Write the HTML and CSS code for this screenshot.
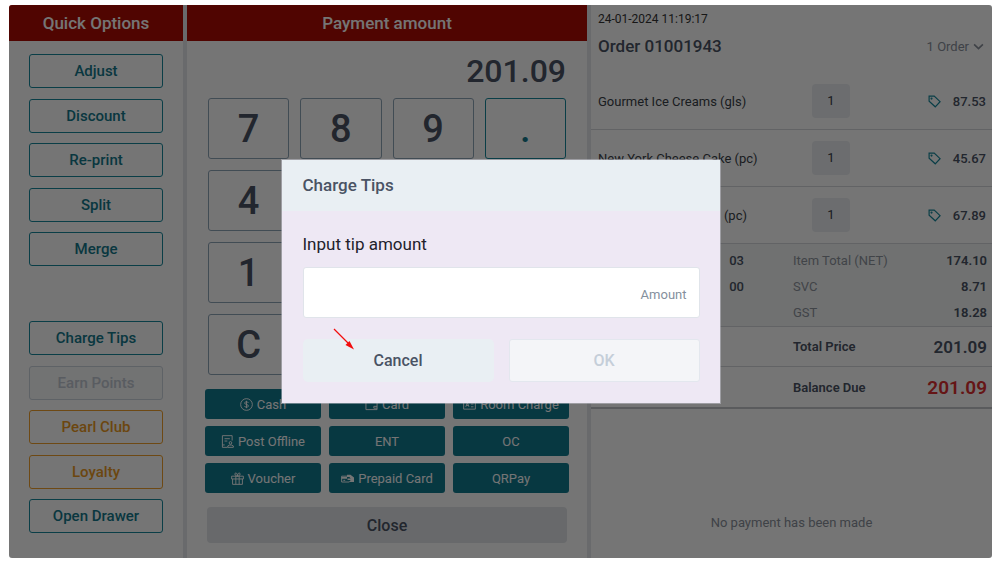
FILE: index.html
```html
<!DOCTYPE html>
<html lang="en">
<head>
    <meta charset="UTF-8">
    <meta name="viewport" content="width=device-width, initial-scale=1.0">
    <title>Payment - Charge Tips</title>
    <link rel="stylesheet" href="styles.css">
</head>
<body>
    <div class="app">
        <nav class="panel options">
            <h2 class="panel-title">Quick Options</h2>
            <div class="option-list">
                <button type="button" class="option">Adjust</button>
                <button type="button" class="option">Discount</button>
                <button type="button" class="option">Re-print</button>
                <button type="button" class="option">Split</button>
                <button type="button" class="option">Merge</button>
                <span class="option-gap"></span>
                <button type="button" class="option">Charge Tips</button>
                <button type="button" class="option" disabled>Earn Points</button>
                <button type="button" class="option gold">Pearl Club</button>
                <button type="button" class="option gold">Loyalty</button>
                <button type="button" class="option">Open Drawer</button>
            </div>
        </nav>

        <main class="panel payment">
            <h2 class="panel-title">Payment amount</h2>
            <div class="amount">201.09</div>
            <div class="keypad">
                <button type="button" class="key">7</button>
                <button type="button" class="key">8</button>
                <button type="button" class="key">9</button>
                <button type="button" class="key dot">.</button>
                <button type="button" class="key first">4</button>
                <button type="button" class="key first">1</button>
                <button type="button" class="key first">C</button>
            </div>
            <div class="methods">
                <button type="button" class="method">
                    <svg class="icon" viewBox="0 0 14 14"><circle cx="7" cy="7" r="6.3"/><path d="M9 5.2C8.7 4.4 7.9 4.1 7 4.1c-1.2 0-2 .6-2 1.4 0 2 4 .9 4 3 0 .9-.9 1.5-2 1.5-1 0-1.900-.4-2.100-1.300M7 3v8"/></svg>
                    Cash
                </button>
                <button type="button" class="method">
                    <svg class="icon" viewBox="0 0 14 14"><path d="M1 2h12v10.500H1zM13 9H9.500v2H13"/></svg>
                    Card
                </button>
                <button type="button" class="method">
                    <svg class="icon" viewBox="0 0 14 14"><path d="M.7 2h12.600v10H.7zM3 9.500l1.700-4.500 1.700 4.500M3.600 8h2.200M8.500 6.500h2.800M8.500 9.500h2.800"/></svg>
                    Room Charge
                </button>
                <button type="button" class="method">
                    <svg class="icon" viewBox="0 0 14 14"><path d="M12 6V.7H1.500v12.600H7M3.800 4h5.700M3.800 6.500h3M1.500 10.700h2.500"/><circle cx="10.200" cy="8.500" r="1.400"/><path d="M7.300 13.300v-1.500l2-1h2l2 1v1.500z"/></svg>
                    Post Offline
                </button>
                <button type="button" class="method">ENT</button>
                <button type="button" class="method">OC</button>
                <button type="button" class="method">
                    <svg class="icon" viewBox="0 0 14 14"><path d="M.7 4.500h12.600v3H.7zM1.700 7.500v5.800h10.600V7.500M5.200 4.500v8.800M8.800 4.500v8.800M7 4.500C4 4.500 3.500 1.300 5 1.100 6.500 1 7 3 7 4.500c0-1.500.5-3.500 2-3.400 1.500.2 1 3.400-2 3.400"/></svg>
                    Voucher
                </button>
                <button type="button" class="method">
                    <svg class="icon" viewBox="0 0 14 14"><path d="M8.500 4.500H.7v6.300h8.300M2.500 9h2"/><path class="solid" d="M.5 5.500h6v1.700h-6zM6.500 3h3.700L14 6v4.800H8.500L10.500 8.500H7V7h3.500L9 5.500H6.500z"/></svg>
                    Prepaid Card
                </button>
                <button type="button" class="method">QRPay</button>
            </div>
            <button type="button" class="close">Close</button>
        </main>

        <section class="panel order">
            <div class="order-head">
                <div class="date">24-01-2024 11:19:17</div>
                <div class="order-line">
                    <h1 class="order-number">Order 01001943</h1>
                    <button type="button" class="order-count">
                        1 Order
                        <svg class="chevron" viewBox="0 0 10 10"><path d="M1 3l4 4 4-4"/></svg>
                    </button>
                </div>
            </div>
            <div class="item">
                <span>Gourmet Ice Creams (gls)</span>
                <span class="qty">1</span>
                <svg class="tag" viewBox="0 0 14 14"><path d="M1.200 1.200h5.500l6.300 6-5.200 5.500L1.200 6.700z"/><circle cx="3.800" cy="3.900" r=".5"/></svg>
                <span class="price">87.53</span>
            </div>
            <div class="item">
                <span>New York Cheese Cake (pc)</span>
                <span class="qty">1</span>
                <svg class="tag" viewBox="0 0 14 14"><path d="M1.200 1.200h5.500l6.300 6-5.200 5.500L1.200 6.700z"/><circle cx="3.800" cy="3.900" r=".5"/></svg>
                <span class="price">45.67</span>
            </div>
            <div class="item">
                <span class="item-end">(pc)</span>
                <span class="qty">1</span>
                <svg class="tag" viewBox="0 0 14 14"><path d="M1.200 1.200h5.500l6.300 6-5.200 5.500L1.200 6.700z"/><circle cx="3.800" cy="3.900" r=".5"/></svg>
                <span class="price">67.89</span>
            </div>
            <div class="totals">
                <div class="row"><span class="count">03</span><span class="label">Item Total (NET)</span><span class="value">174.10</span></div>
                <div class="row"><span class="count">00</span><span class="label">SVC</span><span class="value">8.71</span></div>
                <div class="row"><span class="count"></span><span class="label">GST</span><span class="value">18.28</span></div>
            </div>
            <div class="row sum"><span class="count"></span><span>Total Price</span><span class="sum-value">201.09</span></div>
            <div class="row sum due"><span class="count"></span><span>Balance Due</span><span class="sum-value">201.09</span></div>
            <p class="no-payment">No payment has been made</p>
        </section>

        <div class="overlay">
            <form class="dialog" role="dialog" aria-labelledby="dialogTitle">
                <h2 class="dialog-title" id="dialogTitle">Charge Tips</h2>
                <div class="dialog-body">
                    <label for="tip">Input tip amount</label>
                    <input type="text" id="tip" name="tip" placeholder="Amount">
                    <div class="dialog-buttons">
                        <button type="button" class="cancel">Cancel</button>
                        <button type="submit" class="ok" disabled>OK</button>
                    </div>
                </div>
                <svg class="arrow" viewBox="0 0 22 22"><path class="shaft" d="M1 1l14 14"/><path class="head" d="M21 21.500l-8.500-4.500 4-4z"/></svg>
            </form>
        </div>
    </div>
</body>
</html>
```

FILE: styles.css
```css
* {
    box-sizing: border-box;
}
body {
    margin: 0;
    padding: 5px 8px 11px 9px;
    background-color: #fff;
    color: #4a5364;
    font-family: Roboto, "Liberation Sans", sans-serif;
    font-size: 13px;
}
h1, h2, p {
    margin: 0;
}
button {
    padding: 0;
    font-family: inherit;
    cursor: pointer;
}
svg {
    fill: none;
    stroke: currentColor;
    flex: none;
}
.app {
    position: relative;
    display: grid;
    grid-template-columns: 174fr 400fr 401fr;
    gap: 4px;
    min-height: calc(100vh - 16px);
    background-color: #e4e7ec;
    border-radius: 3px;
    overflow: hidden;
}
.panel {
    display: flex;
    flex-direction: column;
    min-width: 0;
    background-color: #fff;
}
.panel-title {
    height: 36px;
    line-height: 36px;
    text-align: center;
    font-size: 17px;
    font-weight: 500;
    color: #fff;
    background-color: #ae0d04;
}

/* Quick options */
.option-list {
    flex: 1;
    display: grid;
    grid-template-rows: repeat(11, 34px);
    align-content: space-between;
    padding: 13px 20px 25px;
}
.option {
    background-color: #fff;
    border: 1px solid #17889c;
    border-radius: 3px;
    color: #14798b;
    font-size: 15px;
    font-weight: 500;
}
.option:disabled {
    background-color: #f8fafb;
    border-color: #cdd5de;
    color: #c3c9d3;
}
.option.gold {
    border-color: #f0a02c;
    color: #eb9a24;
}

/* Payment */
.amount {
    padding: 0 21px;
    height: 57px;
    line-height: 60px;
    text-align: right;
    font-size: 32px;
    font-weight: 500;
}
.keypad {
    display: grid;
    grid-template-columns: repeat(4, 1fr);
    grid-auto-rows: 61px;
    gap: 11px;
    padding: 0 21px;
}
.key {
    background-color: #fff;
    border: 1px solid #8fa5b8;
    border-radius: 3px;
    color: #4a5364;
    font-size: 38px;
    font-weight: 500;
}
.key.first {
    grid-column: 1;
}
.key.dot {
    border-color: #17889c;
    color: #14798b;
}
.methods {
    display: grid;
    grid-template-columns: repeat(3, 1fr);
    grid-auto-rows: 30px;
    gap: 7px 8px;
    padding: 14px 18px;
}
.method {
    display: flex;
    align-items: center;
    justify-content: center;
    gap: 4px;
    background-color: #117a8f;
    border: none;
    border-radius: 3px;
    color: #fff;
    font-size: 13px;
}
.icon {
    width: 13px;
    height: 13px;
}
.icon .solid {
    fill: currentColor;
    stroke: none;
}
.close {
    height: 36px;
    margin: 0 20px;
    background-color: #e2e5e9;
    border: none;
    border-radius: 4px;
    color: #4a5364;
    font-size: 16px;
    font-weight: 500;
}

/* Order */
.order-head {
    height: 68px;
    padding: 7px 8px 0 7px;
}
.date {
    line-height: 15px;
    font-size: 12px;
    color: #333;
}
.order-line {
    display: flex;
    justify-content: space-between;
    align-items: center;
    height: 38px;
}
.order-number {
    font-size: 17px;
    font-weight: 500;
}
.order-count {
    display: flex;
    align-items: center;
    gap: 4px;
    background: none;
    border: none;
    color: #8a909b;
    font-size: 13px;
}
.chevron {
    width: 11px;
    height: 11px;
    stroke-width: 1.5;
}
.item {
    display: grid;
    grid-template-columns: 1fr 38px 78px 13px 45px;
    align-items: center;
    height: 57px;
    padding: 0 6px 0 7px;
    border-bottom: 1px solid #d5d8dc;
    color: #3a3f48;
}
.item-end {
    justify-self: end;
    padding-right: 65px;
}
.qty {
    height: 34px;
    line-height: 34px;
    text-align: center;
    background-color: #ebedf2;
    border-radius: 4px;
}
.tag {
    grid-column: 4;
    width: 13px;
    height: 13px;
    stroke-width: 1.3;
    color: #17889c;
}
.price {
    text-align: right;
    font-weight: 500;
    color: #4a5364;
}
.totals {
    padding: 3px 0 1px;
    background-color: #f3f7f6;
    border-bottom: 1px solid #d5d8dc;
}
.row {
    display: grid;
    grid-template-columns: 153px 1fr auto;
    column-gap: 49px;
    align-items: center;
    height: 26px;
    padding-right: 5px;
    white-space: nowrap;
}
.count {
    text-align: right;
    font-weight: 500;
}
.label {
    color: #8f949e;
}
.value {
    font-weight: 600;
}
.row.sum {
    height: 40px;
    border-bottom: 1px solid #d5d8dc;
    font-weight: 600;
}
.row.due {
    height: 42px;
    border-bottom: 2px solid #c4c6ca;
}
.sum-value {
    font-size: 17px;
}
.due .sum-value {
    font-size: 19px;
    color: #dd2f30;
}
.no-payment {
    margin-top: auto;
    padding-bottom: 28px;
    text-align: center;
    color: #8a909b;
}

/* Charge tips dialog */
.overlay {
    position: absolute;
    inset: 0;
    display: flex;
    align-items: center;
    justify-content: center;
    background-color: rgba(0, 0, 0, 0.54);
}
.dialog {
    position: relative;
    width: 438px;
    max-width: 100%;
    background-color: #eee8f4;
    box-shadow: 0 0 0 1px rgba(200, 200, 210, 0.5);
}
.dialog-title {
    height: 51px;
    line-height: 51px;
    padding: 0 21px;
    background-color: #e9eff3;
    font-size: 17px;
    font-weight: 500;
}
.dialog-body {
    display: flex;
    flex-direction: column;
    padding: 22px 20px 21px 21px;
}
.dialog-body label {
    line-height: 22px;
    font-size: 17px;
    color: #22222c;
}
.dialog-body input {
    height: 51px;
    margin: 12px 0 21px;
    padding: 4px 12px 0;
    text-align: right;
    background-color: #fff;
    border: 1px solid #e0e4ea;
    border-radius: 3px;
    font-family: inherit;
    font-size: 13px;
}
.dialog-body input::placeholder {
    color: #84909d;
}
.dialog-buttons {
    display: grid;
    grid-template-columns: 1fr 1fr;
    gap: 15px;
}
.dialog-buttons button {
    height: 43px;
    background-color: #e9eff3;
    border: none;
    border-radius: 5px;
    color: #4a5364;
    font-size: 16px;
    font-weight: 500;
}
.dialog-buttons .ok {
    background-color: #f4f5f8;
    border: 1px solid #e3e7ee;
    border-radius: 3px;
    color: #c5ced9;
}
.arrow {
    position: absolute;
    left: 51px;
    top: 168px;
    width: 22px;
    height: 22px;
}
.arrow .shaft {
    stroke: #f20d0d;
    stroke-width: 1.3;
}
.arrow .head {
    fill: #f20d0d;
    stroke: none;
}
```
